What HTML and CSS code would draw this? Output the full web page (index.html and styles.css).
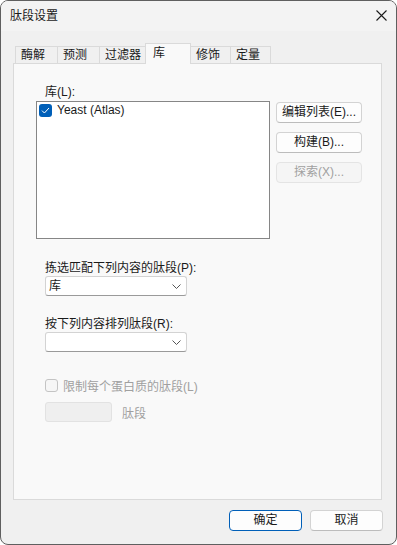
FILE: index.html
```html
<!DOCTYPE html>
<html lang="zh">
<head>
    <meta charset="UTF-8">
    <title>肽段设置</title>
    <link rel="stylesheet" href="styles.css">
</head>
<body>
    <div class="window">
        <div class="titlebar">
            <span class="title">肽段设置</span>
            <svg class="close" width="11" height="11" viewBox="0 0 11 11">
                <path d="M0.5 0.5 L10.5 10.5 M10.5 0.5 L0.5 10.5" stroke="#1a1a1a" stroke-width="1.1" fill="none"/>
            </svg>
        </div>
        <div class="content">
            <div class="tabs">
                <div class="tab w42">酶解</div>
                <div class="tab w42">预测</div>
                <div class="tab w46">过滤器</div>
                <div class="tab active">库</div>
                <div class="tab w40">修饰</div>
                <div class="tab w40">定量</div>
            </div>
            <div class="panel">
                <div class="label lib-label">库(L):</div>
                <div class="lib-row">
                    <div class="listbox">
                        <div class="list-item">
                            <span class="check on">
                                <svg width="9" height="7" viewBox="0 0 9 7">
                                    <path d="M1 3.6 L3.4 6 L8 1" stroke="#fff" stroke-width="1" fill="none"/>
                                </svg>
                            </span>
                            <span>Yeast (Atlas)</span>
                        </div>
                    </div>
                    <div class="side-buttons">
                        <div class="button">编辑列表(E)...</div>
                        <div class="button">构建(B)...</div>
                        <div class="button disabled">探索(X)...</div>
                    </div>
                </div>

                <div class="options">
                    <div class="label">拣选匹配下列内容的肽段(P):</div>
                    <div class="select">
                        <span>库</span>
                        <svg width="9" height="5" viewBox="0 0 9 5"><path d="M0.5 0.5 L4.5 4.5 L8.5 0.5" stroke="#555" fill="none"/></svg>
                    </div>

                    <div class="label second">按下列内容排列肽段(R):</div>
                    <div class="select">
                        <span></span>
                        <svg width="9" height="5" viewBox="0 0 9 5"><path d="M0.5 0.5 L4.5 4.5 L8.5 0.5" stroke="#555" fill="none"/></svg>
                    </div>

                    <div class="limit-row">
                        <span class="check off"></span>
                        <span class="dim">限制每个蛋白质的肽段(L)</span>
                    </div>
                    <div class="count-row">
                        <div class="textbox"></div>
                        <span class="dim">肽段</span>
                    </div>
                </div>
            </div>
            <div class="footer">
                <div class="button default">确定</div>
                <div class="button">取消</div>
            </div>
        </div>
    </div>
</body>
</html>
```

FILE: styles.css
```css
body {
    margin: 0;
    padding: 0;
    background-color: #ffffff;
    font-family: "Liberation Sans", "Noto Sans CJK SC", sans-serif;
    font-size: 12px;
    color: #1a1a1a;
}

.window {
    box-sizing: border-box;
    width: 397px;
    height: 545px;
    border: 1px solid #5f5f5f;
    border-radius: 8px;
    background-color: #f0f0f0;
    display: flex;
    flex-direction: column;
    overflow: hidden;
}

.titlebar {
    height: 30px;
    flex-shrink: 0;
    background-color: #f3f3f3;
    display: flex;
    align-items: center;
    justify-content: space-between;
    padding: 0 9px 0 9px;
}

.title {
    line-height: 16px;
    font-size: 12px;
}

.close {
    margin-top: -1px;
}

.content {
    flex: 1;
    display: flex;
    flex-direction: column;
    padding: 12px 14px 0 12px;
}

.tabs {
    display: flex;
    align-items: flex-end;
    height: 20px;
    padding-left: 2px;
}

.tab {
    box-sizing: border-box;
    height: 17px;
    line-height: 16px;
    padding-left: 5px;
    border: 1px solid #dadada;
    border-bottom: none;
    margin-right: -1px;
    background-color: #f0f0f0;
}

.w42 { width: 43px; }
.w46 { width: 47px; }
.w40 { width: 41px; }

.tab.active {
    width: 46px;
    height: 21px;
    margin-bottom: -1px;
    padding-left: 7px;
    padding-top: 1px;
    background-color: #f9f9f9;
    position: relative;
    z-index: 1;
}

.panel {
    flex: 1;
    box-sizing: border-box;
    background-color: #f9f9f9;
    border: 1px solid #dadada;
    padding: 20px 0 0 22px;
}

.label {
    line-height: 16px;
}

.lib-label {
    margin-left: 9px;
    margin-bottom: 1px;
}

.lib-row {
    display: flex;
    gap: 6px;
}

.listbox {
    box-sizing: border-box;
    width: 234px;
    height: 138px;
    background-color: #ffffff;
    border: 1px solid #868686;
    padding: 1px 2px;
}

.list-item {
    display: flex;
    align-items: center;
    gap: 5px;
    height: 15px;
    line-height: 15px;
}

.check {
    box-sizing: border-box;
    width: 13px;
    height: 13px;
    border-radius: 3px;
    display: flex;
    align-items: center;
    justify-content: center;
    flex-shrink: 0;
}

.check.on {
    background-color: #005fb8;
}

.check.off {
    border: 1px solid #c4c4c4;
    background-color: #f6f6f6;
}

.side-buttons {
    display: flex;
    flex-direction: column;
    gap: 9px;
    padding-top: 1px;
}

.button {
    box-sizing: border-box;
    width: 86px;
    height: 21px;
    line-height: 19px;
    text-align: center;
    background-color: #fdfdfd;
    border: 1px solid #d3d3d3;
    border-bottom-color: #bcbcbc;
    border-radius: 4px;
}

.button.disabled {
    color: #a0a0a0;
    background-color: #f5f5f5;
    border-color: #e4e4e4;
}

.options {
    margin-left: 9px;
    padding-top: 21px;
}

.select {
    box-sizing: border-box;
    width: 142px;
    height: 20px;
    background-color: #ffffff;
    border: 1px solid #d3d3d3;
    border-bottom-color: #9a9a9a;
    border-radius: 3px;
    display: flex;
    align-items: center;
    justify-content: space-between;
    padding: 0 5px 0 3px;
    line-height: 18px;
}

.label.second {
    margin-top: 20px;
}

.limit-row {
    display: flex;
    align-items: center;
    gap: 5px;
    margin-top: 27px;
    height: 13px;
}

.dim {
    color: #a0a0a0;
}

.count-row {
    display: flex;
    align-items: center;
    gap: 10px;
    margin-top: 10px;
}

.textbox {
    box-sizing: border-box;
    width: 67px;
    height: 20px;
    background-color: #efefef;
    border: 1px solid #e2e2e2;
    border-radius: 3px;
}

.footer {
    display: flex;
    justify-content: flex-end;
    gap: 8px;
    padding: 10px 0 13px 0;
    margin-right: -1px;
}

.footer .button {
    width: 73px;
}

.button.default {
    border: 1px solid #005fb8;
}
```
